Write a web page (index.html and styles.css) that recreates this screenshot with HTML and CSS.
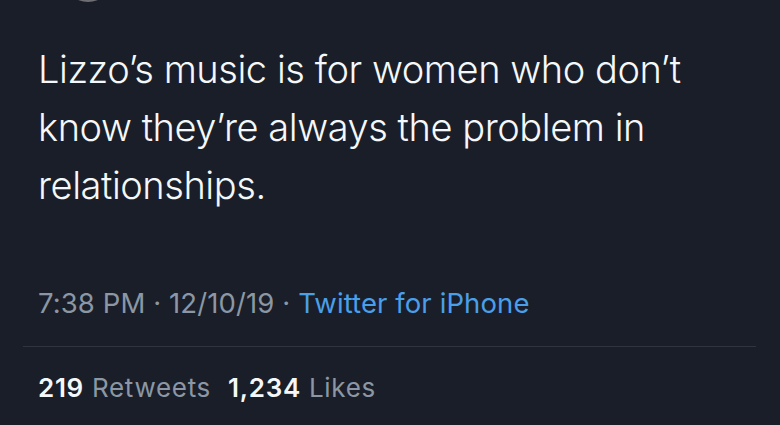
FILE: index.html
```html
<!DOCTYPE html>
<html>
<head>
<meta charset="utf-8">
<link rel="stylesheet" href="styles.css">
</head>
<body>
<div class="tweet">
  <div class="head"><div class="avatar"></div></div>
  <p class="text">Lizzo’s music is for women who don’t know they’re always the problem in relationships.</p>
  <div class="meta">7:38 PM · 12/10/19 · <span class="source">Twitter for iPhone</span></div>
  <div class="sep"></div>
  <div class="stats"><b>219</b> Retweets <b class="likes">1,234</b> Likes</div>
</div>
</body>
</html>
```

FILE: styles.css
```css
html, body {
  margin: 0;
  padding: 0;
  background: #1a1e28;
  font-family: Inter, "Liberation Sans", Arial, sans-serif;
}
.tweet {
  padding: 0 24px 0 23px;
  height: 425px;
  overflow: hidden;
}
.head {
  height: 2px;
  overflow: hidden;
  display: flex;
  align-items: flex-end;
  padding-left: 41px;
}
.avatar {
  width: 48px;
  height: 48px;
  flex: none;
  border-radius: 50%;
  background: #6d6f73;
}
.text {
  margin: 38px 0 0;
  padding-left: 15px;
  color: #f5f8fa;
  font-size: 38px;
  font-weight: 300;
  letter-spacing: -0.45px;
  line-height: 58px;
  width: 690px;
}
.meta {
  margin-top: 71px;
  padding-left: 15px;
  color: #8b97a4;
  font-size: 27.5px;
  letter-spacing: 0.1px;
  line-height: 36px;
}
.source {
  color: #4a9fe9;
}
.sep {
  margin-top: 25px;
  height: 1px;
  background: #2e3440;
}
.stats {
  margin-top: 23px;
  padding-left: 15px;
  color: #8b97a4;
  font-size: 26px;
  letter-spacing: 0.7px;
  line-height: 36px;
}
.stats b {
  color: #f5f8fa;
  font-weight: 600;
}
.likes {
  margin-left: 9px;
}
```
